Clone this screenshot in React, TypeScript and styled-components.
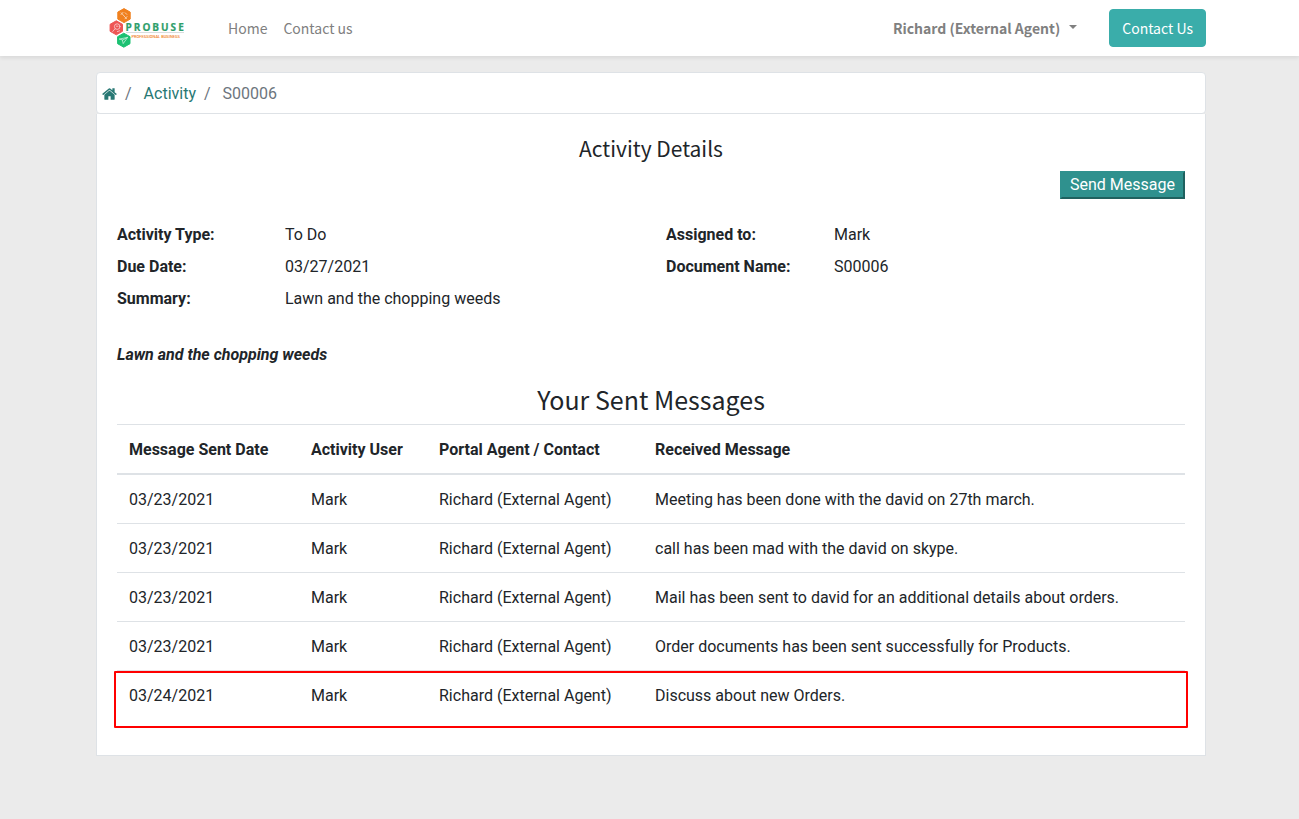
import React from "react";
import styled, { createGlobalStyle, css } from "styled-components";

const headingFont = `"Noto Sans CJK SC", "Noto Sans", sans-serif`;
const line = "#dee2e6";

const GlobalStyle = createGlobalStyle`
  *, *::before, *::after { box-sizing: border-box; }
  body {
    margin: 0;
    background: #ebebeb;
    color: #212529;
    font: 400 16px/24px Roboto, "Liberation Sans", sans-serif;
  }
  a { text-decoration: none; }
`;

const Header = styled.header`
  background: #fff;
  box-shadow: 0 2px 4px rgba(0, 0, 0, 0.08);
  padding: 0 93px 0 96px;
`;

const Nav = styled.nav`
  display: flex;
  align-items: center;
  height: 56px;
  font: 400 14px/24px ${headingFont};
`;

const Brand = styled.a`
  display: block;
  width: 100px;
  height: 40px;
  margin-right: 24px;
  svg { display: block; }
`;

const NavLink = styled.a`
  padding: 8px;
  color: #808080;
`;

const UserMenu = styled.button`
  display: flex;
  align-items: center;
  gap: 9px;
  margin-left: auto;
  margin-right: 32px;
  padding: 8px 0;
  border: 0;
  background: none;
  color: #808080;
  font: 700 14px/24px ${headingFont};

  &::after {
    content: "";
    border: 4px solid transparent;
    border-top-color: currentColor;
    border-bottom: 0;
    margin-bottom: 2px;
  }
`;

const ContactButton = styled.a`
  padding: 6px 12px;
  border: 1px solid #3aadaa;
  border-radius: 4px;
  background: #3aadaa;
  color: #fff;
`;

const Page = styled.main`
  padding: 16px 93px 64px 96px;
`;

const Breadcrumb = styled.ol`
  display: flex;
  align-items: center;
  margin: 0;
  padding: 9px 5px 7px;
  list-style: none;
  background: #fff;
  border: 1px solid ${line};
  border-radius: 4px;
`;

const Crumb = styled.li`
  display: flex;
  align-items: center;
  color: #6c757d;

  a { color: #287874; }
  svg { display: block; }

  & + &::before {
    content: "/";
    padding: 0 12px 0 8px;
  }
`;

const Card = styled.section`
  background: #fff;
  border: 1px solid ${line};
  border-top: 0;
  padding: 20px 20px 36px;
`;

const Title = styled.h1`
  margin: 0 0 8px;
  text-align: center;
  font: 400 21px/29px ${headingFont};
`;

const Actions = styled.div`
  display: flex;
  justify-content: flex-end;
  margin-bottom: 24px;
`;

const SendButton = styled.button`
  padding: 0 8px;
  border: 2px solid;
  border-color: #2f918e #1f615f #1f615f #2f918e;
  background: #2f918e;
  color: #fff;
  font: inherit;
`;

const Details = styled.div`
  display: grid;
  grid-template-columns: 1fr 1fr;
  column-gap: 30px;
  margin-bottom: 32px;
`;

const FieldList = styled.dl`
  display: grid;
  grid-template-columns: 168px 1fr;
  align-content: start;
  row-gap: 8px;
  margin: 0;

  dt { font-weight: 700; }
  dd { margin: 0; }
`;

const Note = styled.p`
  margin: 0 0 15px;
  font-weight: 700;
  font-style: italic;
`;

const SectionTitle = styled.h2`
  margin: 0 0 8px;
  text-align: center;
  font: 400 25px/34px ${headingFont};
`;

const Messages = styled.table`
  width: 100%;
  table-layout: fixed;
  border-spacing: 0;
  text-align: left;
`;

const HeadCell = styled.th<{ $width?: number }>`
  width: ${(p) => (p.$width ? `${p.$width}px` : "auto")};
  padding: 13px 12px 11px;
  border-top: 1px solid ${line};
  border-bottom: 2px solid ${line};
  font-weight: 700;
`;

const Row = styled.tr<{ $highlighted: boolean }>`
  tr + & td { border-top: 1px solid ${line}; }

  ${(p) =>
    p.$highlighted &&
    css`
      position: relative;
      td:last-child::after {
        content: "";
        position: absolute;
        top: 1px;
        left: -3px;
        right: -3px;
        height: 57px;
        border: 2px solid #f00;
        border-radius: 1px;
      }
    `}
`;

const Cell = styled.td`
  padding: 13px 12px 11px;
`;

function HomeIcon() {
  return (
    <svg width="15" height="16" viewBox="64 0 1664 1792" fill="currentColor" aria-hidden="true">
      <path d="M1472 992v480q0 26-19 45t-45 19h-384v-384h-256v384h-384q-26 0-45-19t-19-45v-480q0-1 .5-3t.5-3l575-474 575 474q1 2 1 6zm223-69l-62 74q-8 9-21 11h-3q-13 0-21-7l-692-577-692 577q-12 8-24 7-13-2-21-11l-62-74q-8-10-7-23.5t11-21.5l719-599q32-26 76-26t76 26l244 204v-195q0-14 9-23t23-9h192q14 0 23 9t9 23v408l219 182q10 8 11 21.5t-7 23.5z" />
    </svg>
  );
}

function Hexagon({ x, y, color }: { x: number; y: number; color: string }) {
  return (
    <path
      transform={`translate(${x} ${y})`}
      d="M0-7 6.2-3.5V3.5L0 7-6.2 3.5V-3.5Z"
      fill={color}
      stroke={color}
      strokeWidth="1"
      strokeLinejoin="round"
    />
  );
}

function Logo() {
  return (
    <svg width="100" height="40" viewBox="0 0 100 40" role="img" aria-label="Probuse">
      <Hexagon x={28} y={7.6} color="#f0801f" />
      <Hexagon x={20.3} y={19.8} color="#ee5555" />
      <Hexagon x={27.8} y={32.2} color="#1cc172" />
      <g fill="none" stroke="#fff" strokeWidth="0.8" strokeLinecap="round" opacity="0.75">
        <path d="M25.2 4.8l5.4 6M25 6.6l2-2.2M29 10.8l2-2.2M29.2 4.8l1.6 1.6" />
        <circle cx="21.2" cy="18.6" r="2.8" />
        <path d="M19 20.8l-2.3 2.7M20.4 18.2h1.6M21.4 23.6l2.2-.8" />
        <path d="M23.6 31l8-1.6-4.4 6.2-.8-3.4zM26.4 32.2l5.2-2.8" />
      </g>
      <text
        x="29.5"
        y="22.6"
        fontFamily="Open Sans, sans-serif"
        fontWeight="700"
        fontSize="10"
        letterSpacing="2"
        fill="#2f9e6b"
        stroke="#2f9e6b"
        strokeWidth="0.2"
      >
        PROBUSE
      </text>
      <path d="M30 24.5h58" stroke="#c9cfd0" strokeWidth="0.7" />
      <text x="35.5" y="30" fontFamily="Roboto, sans-serif" fontWeight="500" fontSize="4" fill="#f07d1a">
        PROFESSIONAL BUSINESS
      </text>
    </svg>
  );
}

const agent = "Richard (External Agent)";

const messages = [
  { date: "03/23/2021", text: "Meeting has been done with the david on 27th march." },
  { date: "03/23/2021", text: "call has been mad with the david on skype." },
  { date: "03/23/2021", text: "Mail has been sent to david for an additional details about orders." },
  { date: "03/23/2021", text: "Order documents has been sent successfully for Products." },
  { date: "03/24/2021", text: "Discuss about new Orders.", highlighted: true },
];

export default function App() {
  return (
    <>
      <GlobalStyle />
      <Header>
        <Nav>
          <Brand href="#"><Logo /></Brand>
          <NavLink href="#">Home</NavLink>
          <NavLink href="#">Contact us</NavLink>
          <UserMenu type="button" aria-haspopup="menu">{agent}</UserMenu>
          <ContactButton href="#">Contact Us</ContactButton>
        </Nav>
      </Header>
      <Page>
        <Breadcrumb>
          <Crumb><a href="#" aria-label="Home"><HomeIcon /></a></Crumb>
          <Crumb><a href="#">Activity</a></Crumb>
          <Crumb>S00006</Crumb>
        </Breadcrumb>
        <Card>
          <Title>Activity Details</Title>
          <Actions>
            <SendButton type="button">Send Message</SendButton>
          </Actions>
          <Details>
            <FieldList>
              <dt>Activity Type:</dt><dd>To Do</dd>
              <dt>Due Date:</dt><dd>03/27/2021</dd>
              <dt>Summary:</dt><dd>Lawn and the chopping weeds</dd>
            </FieldList>
            <FieldList>
              <dt>Assigned to:</dt><dd>Mark</dd>
              <dt>Document Name:</dt><dd>S00006</dd>
            </FieldList>
          </Details>
          <Note>Lawn and the chopping weeds</Note>
          <SectionTitle>Your Sent Messages</SectionTitle>
          <Messages>
            <thead>
              <tr>
                <HeadCell $width={182}>Message Sent Date</HeadCell>
                <HeadCell $width={128}>Activity User</HeadCell>
                <HeadCell $width={216}>Portal Agent / Contact</HeadCell>
                <HeadCell>Received Message</HeadCell>
              </tr>
            </thead>
            <tbody>
              {messages.map((m) => (
                <Row key={m.text} $highlighted={Boolean(m.highlighted)}>
                  <Cell>{m.date}</Cell>
                  <Cell>Mark</Cell>
                  <Cell>{agent}</Cell>
                  <Cell>{m.text}</Cell>
                </Row>
              ))}
            </tbody>
          </Messages>
        </Card>
      </Page>
    </>
  );
}
